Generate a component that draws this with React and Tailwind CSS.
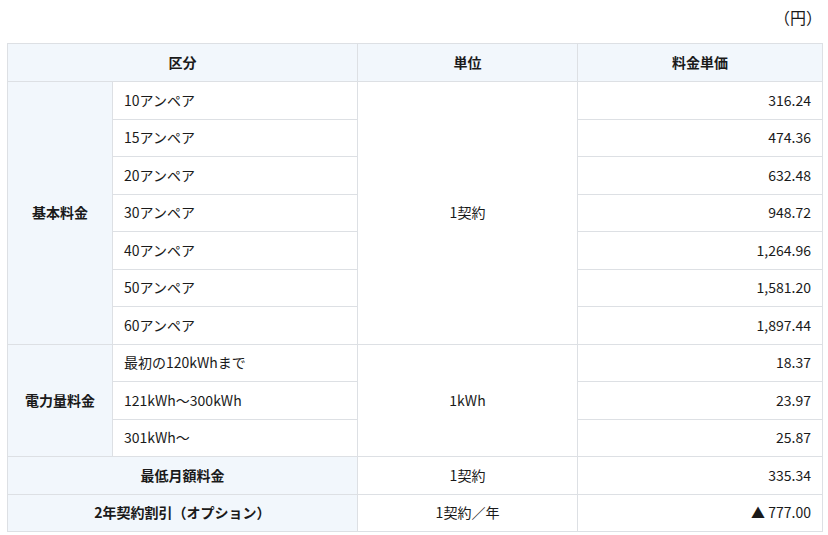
import React from 'react';

const amps = [
  { label: '10アンペア', price: '316.24' },
  { label: '15アンペア', price: '474.36' },
  { label: '20アンペア', price: '632.48' },
  { label: '30アンペア', price: '948.72' },
  { label: '40アンペア', price: '1,264.96' },
  { label: '50アンペア', price: '1,581.20' },
  { label: '60アンペア', price: '1,897.44' },
];

const energy = [
  { label: '最初の120kWhまで', price: '18.37' },
  { label: '121kWh～300kWh', price: '23.97' },
  { label: '301kWh～', price: '25.87' },
];

const cell = 'border border-[#dde0e4] px-[11px] py-0';
const head = `${cell} bg-[#f2f7fc] font-bold text-center`;

export default function App() {
  return (
    <div
      className="w-[828px] h-[535px] bg-white text-[14px] text-[#1a1a1a] pl-[7px] pr-[6px]"
      style={{ fontFamily: '"Noto Sans CJK JP", "Noto Sans", sans-serif' }}
    >
      <div className="h-[43px] flex items-center justify-end pb-[9px]">
        <span className="text-[16px]">（円）</span>
      </div>
      <table className="w-[815px] border-collapse table-fixed">
        <colgroup>
          <col className="w-[105px]" />
          <col className="w-[245px]" />
          <col className="w-[220px]" />
          <col className="w-[245px]" />
        </colgroup>
        <thead>
          <tr className="h-[38px]">
            <th colSpan={2} className={head}>区分</th>
            <th className={head}>単位</th>
            <th className={head}>料金単価</th>
          </tr>
        </thead>
        <tbody>
          {amps.map((r, i) => (
            <tr key={r.label} className="h-[37.5px]">
              {i === 0 && (
                <th rowSpan={amps.length} className={head}>基本料金</th>
              )}
              <td className={cell}>{r.label}</td>
              {i === 0 && (
                <td rowSpan={amps.length} className={`${cell} text-center`}>1契約</td>
              )}
              <td className={`${cell} text-right`}>{r.price}</td>
            </tr>
          ))}
          {energy.map((r, i) => (
            <tr key={r.label} className="h-[37.5px]">
              {i === 0 && (
                <th rowSpan={energy.length} className={head}>電力量料金</th>
              )}
              <td className={cell}>{r.label}</td>
              {i === 0 && (
                <td rowSpan={energy.length} className={`${cell} text-center`}>1kWh</td>
              )}
              <td className={`${cell} text-right`}>{r.price}</td>
            </tr>
          ))}
          <tr className="h-[37.5px]">
            <th colSpan={2} className={head}>最低月額料金</th>
            <td className={`${cell} text-center`}>1契約</td>
            <td className={`${cell} text-right`}>335.34</td>
          </tr>
          <tr className="h-[37.5px]">
            <th colSpan={2} className={head}>2年契約割引（オプション）</th>
            <td className={`${cell} text-center`}>1契約／年</td>
            <td className={`${cell} text-right`}>▲ 777.00</td>
          </tr>
        </tbody>
      </table>
    </div>
  );
}
